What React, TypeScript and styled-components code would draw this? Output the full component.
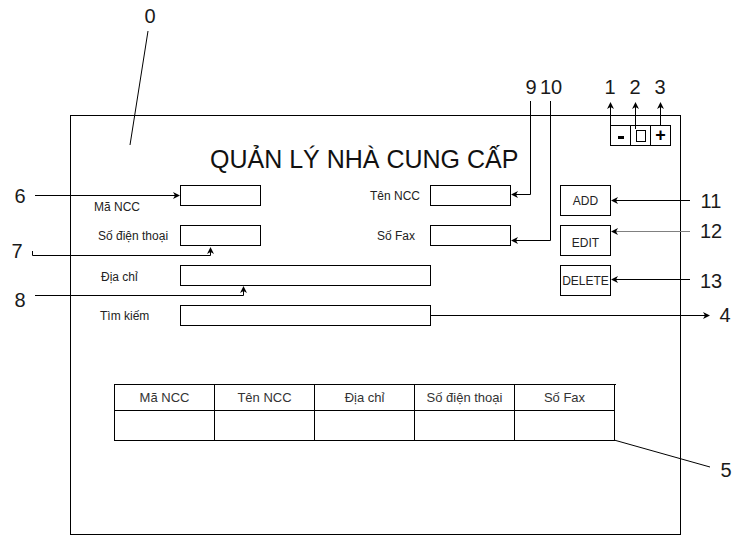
import React from 'react';
import styled, { createGlobalStyle } from 'styled-components';

const GlobalStyle = createGlobalStyle`
  html, body {
    margin: 0;
    padding: 0;
    background: #ffffff;
  }
  body {
    font-family: 'Liberation Sans', Arial, sans-serif;
    color: #222;
  }
`;

const Page = styled.div`
  position: relative;
  width: 741px;
  height: 536px;
  padding: 115px 0 0 70px;
  box-sizing: border-box;
  overflow: hidden;
`;

const Frame = styled.div`
  width: 611px;
  height: 420px;
  box-sizing: border-box;
  border: 1px solid #000;
  display: flex;
  flex-direction: column;
`;

const Controls = styled.div`
  align-self: flex-end;
  display: flex;
  margin: 9px 9px 0 0;
  border: 1px solid #000;
  height: 21px;
  box-sizing: border-box;
`;

const ControlCell = styled.div<{ $first?: boolean }>`
  width: 19px;
  height: 19px;
  display: flex;
  align-items: center;
  justify-content: center;
  border-left: ${(p) => (p.$first ? 'none' : '1px solid #000')};
  font-weight: bold;
  font-size: 18px;
  line-height: 19px;
  color: #000;
`;

const MinIcon = styled.span`
  display: block;
  width: 6px;
  height: 3px;
  margin-top: 4px;
  background: #000;
`;

const MaxIcon = styled.span`
  display: block;
  width: 10px;
  height: 12px;
  box-sizing: border-box;
  border: 1px solid #000;
`;

const Title = styled.h1`
  margin: 0;
  padding-left: 139px;
  font-size: 25px;
  font-weight: normal;
  line-height: 26px;
  color: #111;
`;

const FormGrid = styled.div`
  margin-top: 13px;
  display: grid;
  grid-template-columns: 109px 81px 169px 81px 49px 51px;
  grid-template-rows: 31px 31px 31px 21px;
  row-gap: 9px;
`;

const Label = styled.span<{ $col: number; $row: number; $indent?: number; $right?: number; $top: number }>`
  grid-column: ${(p) => p.$col};
  grid-row: ${(p) => p.$row};
  justify-self: ${(p) => (p.$right !== undefined ? 'end' : 'start')};
  align-self: start;
  margin-top: ${(p) => p.$top}px;
  margin-left: ${(p) => p.$indent ?? 0}px;
  margin-right: ${(p) => p.$right ?? 0}px;
  font-size: 12px;
  line-height: 14px;
  color: #222;
  white-space: nowrap;
`;

const Field = styled.div<{ $col: number; $row: number; $wide?: boolean }>`
  grid-column: ${(p) => (p.$wide ? `${p.$col} / span 2` : p.$col)};
  grid-row: ${(p) => p.$row};
  align-self: start;
  width: ${(p) => (p.$wide ? 251 : 81)}px;
  height: 21px;
  box-sizing: border-box;
  border: 1px solid #000;
  background: #fff;
`;

const ActionButton = styled.div<{ $row: number; $drop?: number }>`
  grid-column: 6;
  grid-row: ${(p) => p.$row};
  width: 51px;
  height: 31px;
  box-sizing: border-box;
  border: 1px solid #000;
  display: flex;
  align-items: center;
  justify-content: center;
  padding-top: ${(p) => p.$drop ?? 0}px;
  font-size: 12px;
  color: #222;
`;

const Table = styled.div`
  margin: 58px 0 0 43px;
  width: 501px;
  display: grid;
  grid-template-columns: repeat(5, 100px);
  grid-template-rows: 26px 30px;
  border-top: 1px solid #000;
  border-left: 1px solid #000;
`;

const Cell = styled.div`
  box-sizing: border-box;
  border-right: 1px solid #000;
  border-bottom: 1px solid #000;
  display: flex;
  align-items: center;
  justify-content: center;
  font-size: 13px;
  color: #333;
`;

const Overlay = styled.svg`
  position: absolute;
  top: 0;
  left: 0;
  pointer-events: none;
`;

const Callout = styled.span<{ $x: number; $y: number }>`
  position: absolute;
  left: ${(p) => p.$x}px;
  top: ${(p) => p.$y}px;
  transform: translate(-50%, -50%);
  font-size: 20px;
  line-height: 20px;
  color: #1a1a1a;
  white-space: nowrap;
`;

type Dir = 'up' | 'left' | 'right';

function head(x: number, y: number, dir: Dir) {
  if (dir === 'right') return `${x},${y} ${x - 7},${y - 3.5} ${x - 5},${y} ${x - 7},${y + 3.5}`;
  if (dir === 'left') return `${x},${y} ${x + 7},${y - 3.5} ${x + 5},${y} ${x + 7},${y + 3.5}`;
  return `${x},${y} ${x - 3.5},${y + 7} ${x},${y + 5} ${x + 3.5},${y + 7}`;
}

const leaders: { d: string; tip?: [number, number, Dir]; grey?: boolean }[] = [
  { d: 'M148,31 L130,145' },
  { d: 'M610.5,125 V104', tip: [610.5, 102, 'up'] },
  { d: 'M635.5,129 V104', tip: [635.5, 102, 'up'] },
  { d: 'M660.5,125 V104', tip: [660.5, 102, 'up'] },
  { d: 'M530.5,101 V194.5 H514', tip: [511, 194.5, 'left'] },
  { d: 'M550.5,101 V240.5 H514', tip: [511, 240.5, 'left'] },
  { d: 'M35,195.5 H177', tip: [180, 195.5, 'right'] },
  { d: 'M32.5,251 V255.5 H210.5 V250', tip: [210.5, 247, 'up'] },
  { d: 'M35,295.5 H243.5 V289', tip: [243.5, 286, 'up'] },
  { d: 'M690,200.5 H614', tip: [611, 200.5, 'left'] },
  { d: 'M690,231.5 H614', tip: [611, 231.5, 'left'], grey: true },
  { d: 'M690,279.5 H614', tip: [611, 279.5, 'left'] },
  { d: 'M430,315.5 H707', tip: [710, 315.5, 'right'] },
  { d: 'M614,440 L710,467' },
];

const callouts: [string, number, number][] = [
  ['0', 150, 16],
  ['1', 610, 87],
  ['2', 635, 87],
  ['3', 660, 87],
  ['9', 531, 87],
  ['10', 551, 87],
  ['6', 20, 196],
  ['7', 17, 251],
  ['8', 20, 300],
  ['11', 711, 201],
  ['12', 711, 231],
  ['13', 711, 281],
  ['4', 725, 315],
  ['5', 726, 470],
];

const columns = ['Mã NCC', 'Tên NCC', 'Địa chỉ', 'Số điện thoại', 'Số Fax'];

export default function App() {
  return (
    <>
      <GlobalStyle />
      <Page>
        <Frame>
          <Controls>
            <ControlCell $first>
              <MinIcon />
            </ControlCell>
            <ControlCell>
              <MaxIcon />
            </ControlCell>
            <ControlCell>+</ControlCell>
          </Controls>
          <Title>QUẢN LÝ NHÀ CUNG CẤP</Title>
          <FormGrid>
            <Label $col={1} $row={1} $indent={23} $top={15}>Mã NCC</Label>
            <Field $col={2} $row={1} />
            <Label $col={3} $row={1} $right={10} $top={4}>Tên NCC</Label>
            <Field $col={4} $row={1} />
            <ActionButton $row={1}>ADD</ActionButton>

            <Label $col={1} $row={2} $indent={27} $top={4}>Số điện thoại</Label>
            <Field $col={2} $row={2} />
            <Label $col={3} $row={2} $right={15} $top={4}>Số Fax</Label>
            <Field $col={4} $row={2} />
            <ActionButton $row={2} $drop={4}>EDIT</ActionButton>

            <Label $col={1} $row={3} $indent={30} $top={5}>Địa chỉ</Label>
            <Field $col={2} $row={3} $wide />
            <ActionButton $row={3}>DELETE</ActionButton>

            <Label $col={1} $row={4} $indent={29} $top={4}>Tìm kiếm</Label>
            <Field $col={2} $row={4} $wide />
          </FormGrid>
          <Table>
            {columns.map((c) => (
              <Cell key={c}>{c}</Cell>
            ))}
            {columns.map((c) => (
              <Cell key={'row-' + c} />
            ))}
          </Table>
        </Frame>

        <Overlay width={741} height={536} viewBox="0 0 741 536">
          {leaders.map((l, i) => (
            <g key={i}>
              <path d={l.d} fill="none" stroke={l.grey ? '#808080' : '#000'} strokeWidth={1} />
              {l.tip && <polygon points={head(l.tip[0], l.tip[1], l.tip[2])} fill="#000" />}
            </g>
          ))}
        </Overlay>
        {callouts.map(([t, x, y]) => (
          <Callout key={t} $x={x} $y={y}>
            {t}
          </Callout>
        ))}
      </Page>
    </>
  );
}
